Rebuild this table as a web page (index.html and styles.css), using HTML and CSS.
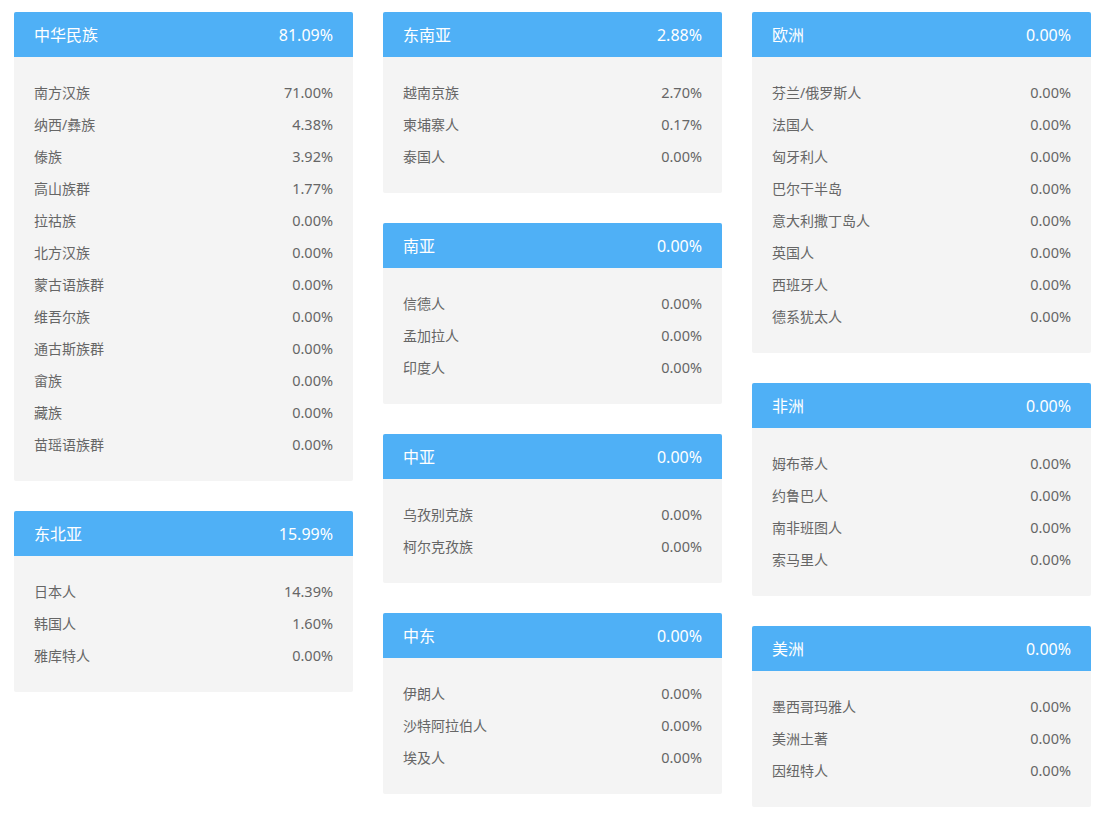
FILE: index.html
```html
<!DOCTYPE html>
<html lang="zh-CN">
<head>
<meta charset="utf-8">
<title>族群分布</title>
<link rel="stylesheet" href="styles.css">
</head>
<body>
<div class="grid">
  <div class="col">
    <div class="card">
      <div class="card-head"><span>中华民族</span><span>81.09%</span></div>
      <ul class="card-body">
        <li><span>南方汉族</span><span class="num">71.00%</span></li>
        <li><span>纳西/彝族</span><span class="num">4.38%</span></li>
        <li><span>傣族</span><span class="num">3.92%</span></li>
        <li><span>高山族群</span><span class="num">1.77%</span></li>
        <li><span>拉祜族</span><span class="num">0.00%</span></li>
        <li><span>北方汉族</span><span class="num">0.00%</span></li>
        <li><span>蒙古语族群</span><span class="num">0.00%</span></li>
        <li><span>维吾尔族</span><span class="num">0.00%</span></li>
        <li><span>通古斯族群</span><span class="num">0.00%</span></li>
        <li><span>畲族</span><span class="num">0.00%</span></li>
        <li><span>藏族</span><span class="num">0.00%</span></li>
        <li><span>苗瑶语族群</span><span class="num">0.00%</span></li>
      </ul>
    </div>
    <div class="card">
      <div class="card-head"><span>东北亚</span><span>15.99%</span></div>
      <ul class="card-body">
        <li><span>日本人</span><span class="num">14.39%</span></li>
        <li><span>韩国人</span><span class="num">1.60%</span></li>
        <li><span>雅库特人</span><span class="num">0.00%</span></li>
      </ul>
    </div>
  </div>
  <div class="col">
    <div class="card">
      <div class="card-head"><span>东南亚</span><span>2.88%</span></div>
      <ul class="card-body">
        <li><span>越南京族</span><span class="num">2.70%</span></li>
        <li><span>柬埔寨人</span><span class="num">0.17%</span></li>
        <li><span>泰国人</span><span class="num">0.00%</span></li>
      </ul>
    </div>
    <div class="card">
      <div class="card-head"><span>南亚</span><span>0.00%</span></div>
      <ul class="card-body">
        <li><span>信德人</span><span class="num">0.00%</span></li>
        <li><span>孟加拉人</span><span class="num">0.00%</span></li>
        <li><span>印度人</span><span class="num">0.00%</span></li>
      </ul>
    </div>
    <div class="card">
      <div class="card-head"><span>中亚</span><span>0.00%</span></div>
      <ul class="card-body">
        <li><span>乌孜别克族</span><span class="num">0.00%</span></li>
        <li><span>柯尔克孜族</span><span class="num">0.00%</span></li>
      </ul>
    </div>
    <div class="card">
      <div class="card-head"><span>中东</span><span>0.00%</span></div>
      <ul class="card-body">
        <li><span>伊朗人</span><span class="num">0.00%</span></li>
        <li><span>沙特阿拉伯人</span><span class="num">0.00%</span></li>
        <li><span>埃及人</span><span class="num">0.00%</span></li>
      </ul>
    </div>
  </div>
  <div class="col">
    <div class="card">
      <div class="card-head"><span>欧洲</span><span>0.00%</span></div>
      <ul class="card-body">
        <li><span>芬兰/俄罗斯人</span><span class="num">0.00%</span></li>
        <li><span>法国人</span><span class="num">0.00%</span></li>
        <li><span>匈牙利人</span><span class="num">0.00%</span></li>
        <li><span>巴尔干半岛</span><span class="num">0.00%</span></li>
        <li><span>意大利撒丁岛人</span><span class="num">0.00%</span></li>
        <li><span>英国人</span><span class="num">0.00%</span></li>
        <li><span>西班牙人</span><span class="num">0.00%</span></li>
        <li><span>德系犹太人</span><span class="num">0.00%</span></li>
      </ul>
    </div>
    <div class="card">
      <div class="card-head"><span>非洲</span><span>0.00%</span></div>
      <ul class="card-body">
        <li><span>姆布蒂人</span><span class="num">0.00%</span></li>
        <li><span>约鲁巴人</span><span class="num">0.00%</span></li>
        <li><span>南非班图人</span><span class="num">0.00%</span></li>
        <li><span>索马里人</span><span class="num">0.00%</span></li>
      </ul>
    </div>
    <div class="card">
      <div class="card-head"><span>美洲</span><span>0.00%</span></div>
      <ul class="card-body">
        <li><span>墨西哥玛雅人</span><span class="num">0.00%</span></li>
        <li><span>美洲土著</span><span class="num">0.00%</span></li>
        <li><span>因纽特人</span><span class="num">0.00%</span></li>
      </ul>
    </div>
  </div>
</div>
</body>
</html>
```
FILE: styles.css
```css
html, body {
  margin: 0;
  padding: 0;
  background: #ffffff;
}
body {
  font-family: "Noto Sans", "Noto Sans CJK SC", sans-serif;
  padding: 12px 0 0 14px;
}
.grid {
  display: flex;
  gap: 30px;
  align-items: flex-start;
}
.col {
  width: 339px;
  display: flex;
  flex-direction: column;
  gap: 30px;
}
.card {
  border-radius: 2px;
  overflow: hidden;
  background: #f4f4f4;
}
.card-head {
  height: 45px;
  background: #4fb0f6;
  color: #ffffff;
  font-size: 16px;
  display: flex;
  align-items: center;
  justify-content: space-between;
  padding: 0 20px;
  line-height: 1;
}
.card-body {
  list-style: none;
  margin: 0;
  padding: 20px 20px;
}
.card-body li {
  height: 32px;
  display: flex;
  align-items: center;
  justify-content: space-between;
  font-size: 14px;
  color: #666666;
  padding-bottom: 3px;
  box-sizing: border-box;
}
.card-body .num {
  font-size: 14.5px;
}
```
